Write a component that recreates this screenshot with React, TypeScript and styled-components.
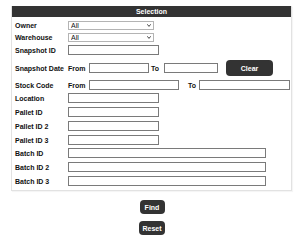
import * as React from "react";
import styled, { createGlobalStyle } from "styled-components";

const GlobalStyle = createGlobalStyle`
  html, body {
    margin: 0;
    padding: 0;
    background: #fff;
  }
  body {
    font-family: "Liberation Sans", Arial, sans-serif;
    font-size: 7px;
  }
`;

const Page = styled.div`
  padding: 6px 8px 0 11px;
  width: 281px;
`;

const Panel = styled.div`
  border: 1px solid #e2e2e2;
  border-top: none;
  box-shadow: 1px 1px 1px rgba(0, 0, 0, 0.04);
  padding-bottom: 3px;
`;

const Header = styled.div`
  height: 11px;
  background: #333;
  color: #fff;
  font-weight: bold;
  font-size: 7px;
  line-height: 11px;
  text-align: center;
`;

const Row = styled.div<{ $mt?: number; $h?: number }>`
  display: flex;
  align-items: center;
  height: ${(p) => p.$h || 12}px;
  margin-top: ${(p) => p.$mt || 0}px;
  padding-left: 3px;
`;

const Label = styled.div`
  width: 53px;
  flex: none;
  font-weight: bold;
  color: #111;
  white-space: nowrap;
`;

const SubLabel = styled.span<{ $w: number; $pl?: number }>`
  box-sizing: border-box;
  width: ${(p) => p.$w}px;
  padding-left: ${(p) => p.$pl || 0}px;
  flex: none;
  font-weight: bold;
  color: #111;
`;

const Input = styled.input<{ $w: number }>`
  width: ${(p) => p.$w}px;
  height: 10px;
  box-sizing: border-box;
  border: 1px solid #7a7a7a;
  border-radius: 0;
  padding: 0 2px;
  margin: 0;
  font-size: 7px;
  background: #fff;
  flex: none;
`;

const SelectWrap = styled.div`
  position: relative;
  width: 86px;
  height: 9px;
  flex: none;
`;

const Select = styled.select`
  appearance: none;
  width: 100%;
  height: 9px;
  box-sizing: border-box;
  border: 1px solid #b4b4b4;
  border-radius: 0;
  padding: 0 0 0 2px;
  margin: 0;
  font-family: "Liberation Sans", Arial, sans-serif;
  font-size: 7px;
  line-height: 7px;
  color: #111;
  background: #fff;
`;

const Chevron = styled.svg`
  position: absolute;
  right: 3px;
  top: 3px;
  width: 4px;
  height: 3px;
  pointer-events: none;
`;

const DarkButton = styled.button<{ $w: number; $h: number }>`
  width: ${(p) => p.$w}px;
  height: ${(p) => p.$h}px;
  background: #333;
  color: #fff;
  border: none;
  border-radius: 4px;
  font-family: "Liberation Sans", Arial, sans-serif;
  font-weight: bold;
  font-size: 7px;
  padding: 0;
  flex: none;
`;

const Spacer = styled.span<{ $w: number }>`
  width: ${(p) => p.$w}px;
  flex: none;
`;

const Actions = styled.div`
  display: flex;
  flex-direction: column;
  align-items: center;
  gap: 7px;
  margin-top: 9px;
  padding-left: 1px;
`;

const Dropdown = () => (
  <SelectWrap>
    <Select defaultValue="All">
      <option>All</option>
    </Select>
    <Chevron viewBox="0 0 4 3">
      <path d="M0.3 0.3 L2 2.4 L3.7 0.3" fill="none" stroke="#333" strokeWidth="0.9" />
    </Chevron>
  </SelectWrap>
);

const rows: [string, number][] = [
  ["Location", 1],
  ["Pallet ID", 2],
  ["Pallet ID 2", 2],
  ["Pallet ID 3", 2],
];

const batchRows: [string, number][] = [
  ["Batch ID", 1],
  ["Batch ID 2", 2],
  ["Batch ID 3", 2],
];

export default function App() {
  return (
    <>
      <GlobalStyle />
      <Page>
        <Panel>
          <Header>Selection</Header>
          <Row $mt={2}>
            <Label>Owner</Label>
            <Dropdown />
          </Row>
          <Row>
            <Label>Warehouse</Label>
            <Dropdown />
          </Row>
          <Row $mt={1}>
            <Label>Snapshot ID</Label>
            <Input $w={91} />
          </Row>
          <Row $mt={4} $h={16}>
            <Label>Snapshot Date</Label>
            <SubLabel $w={21}>From</SubLabel>
            <Input $w={60} />
            <SubLabel $w={15} $pl={2}>To</SubLabel>
            <Input $w={54} />
            <Spacer $w={8} />
            <DarkButton $w={47} $h={16}>Clear</DarkButton>
          </Row>
          <Row $mt={3}>
            <Label>Stock Code</Label>
            <SubLabel $w={21}>From</SubLabel>
            <Input $w={90} />
            <SubLabel $w={20} $pl={9}>To</SubLabel>
            <Input $w={91} />
          </Row>
          {rows.map(([label, mt]) => (
            <Row key={label} $mt={mt}>
              <Label>{label}</Label>
              <Input $w={91} />
            </Row>
          ))}
          {batchRows.map(([label, mt]) => (
            <Row key={label} $mt={mt}>
              <Label>{label}</Label>
              <Input $w={198} />
            </Row>
          ))}
        </Panel>
        <Actions>
          <DarkButton $w={25} $h={14}>Find</DarkButton>
          <DarkButton $w={26} $h={14}>Reset</DarkButton>
        </Actions>
      </Page>
    </>
  );
}
